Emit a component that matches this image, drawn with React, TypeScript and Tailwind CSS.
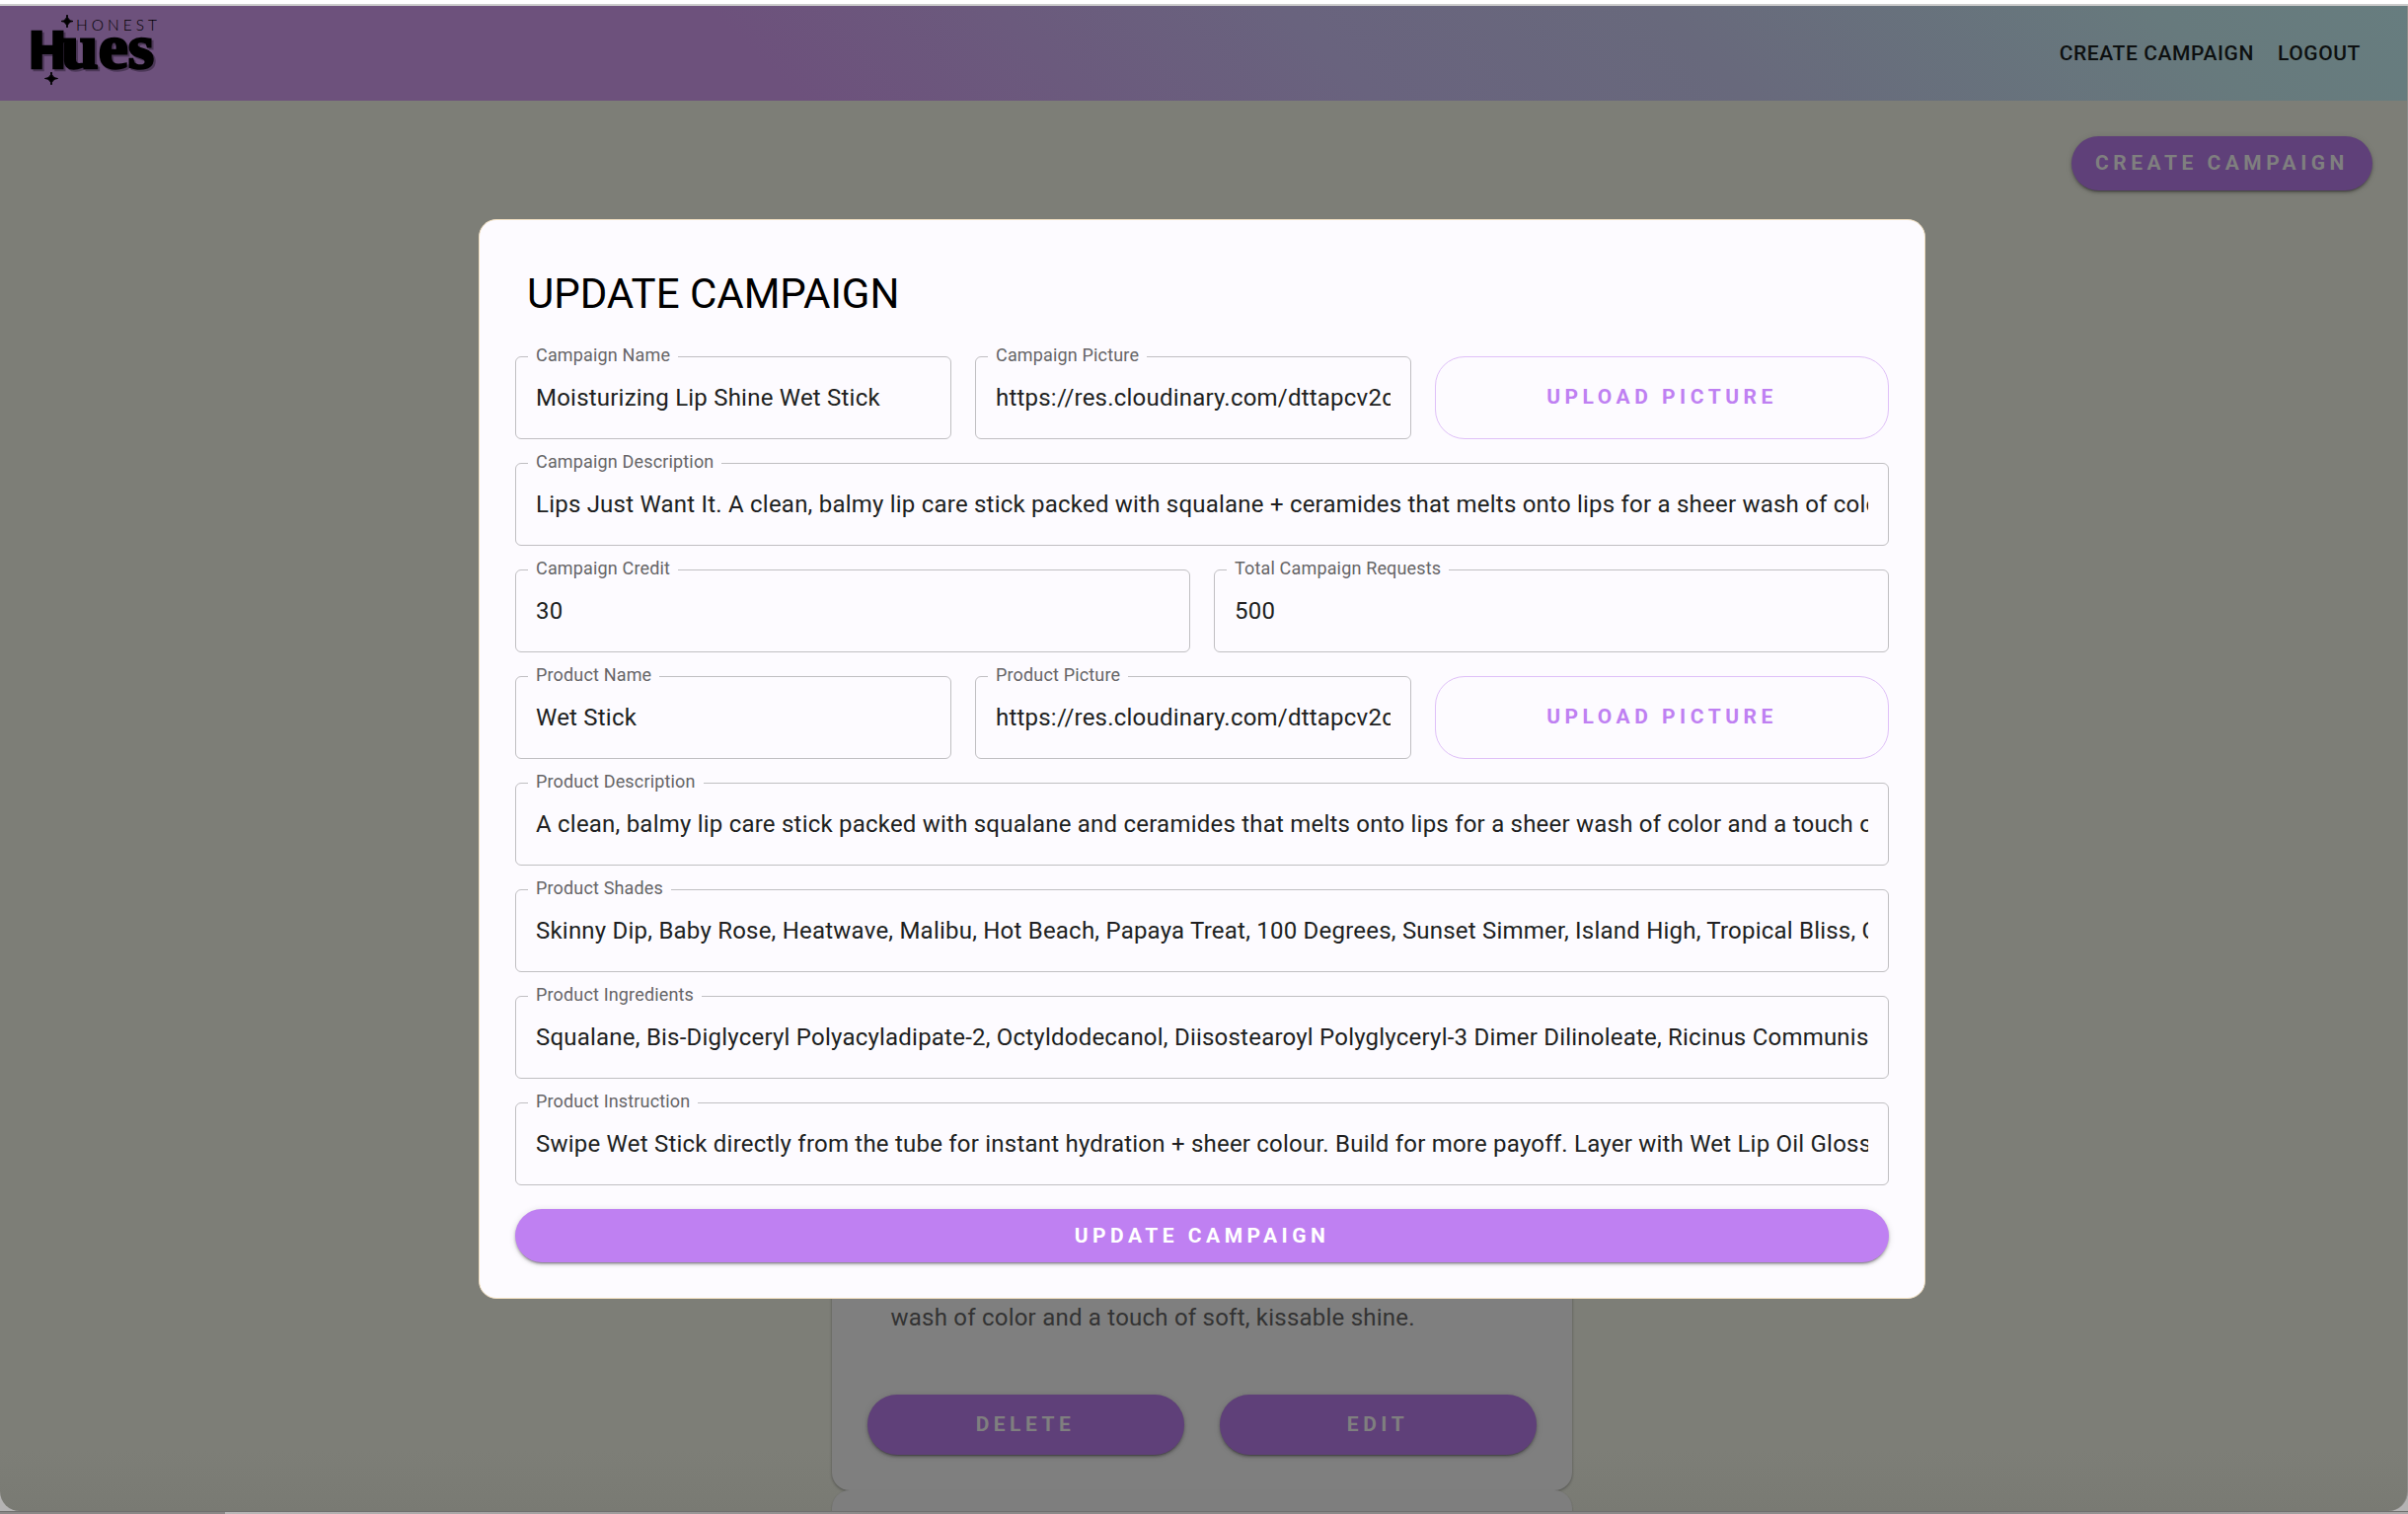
import React from "react";

const raised =
  "shadow-[0_3px_1px_-2px_rgba(0,0,0,0.2),0_2px_3px_0_rgba(0,0,0,0.28),0_1px_7px_0_rgba(0,0,0,0.12)]";

function Field({ label, value, className = "" }: { label: string; value: string; className?: string }) {
  return (
    <fieldset className={`h-[94px] min-w-0 -mt-[10px] rounded-[6px] border border-[#c0bfc2] px-[12px] ${className}`}>
      <legend className="h-[20px] px-[8px] text-[18px] leading-[18px] tracking-[0.16px] text-[#666567] whitespace-nowrap">
        {label}
      </legend>
      <div className="mx-[8px] mt-[15px] overflow-hidden whitespace-nowrap text-[24px] leading-[34px] tracking-[0.217px] text-[#201f21]">
        {value}
      </div>
    </fieldset>
  );
}

function UploadButton() {
  return (
    <button className="h-[84px] w-[460px] shrink-0 rounded-[30px] border border-[#dfc0f8] text-[21px] font-bold tracking-[4.5px] text-[#bf80f2]">
      UPLOAD PICTURE
    </button>
  );
}

function Logo() {
  return (
    <svg className="ml-[30px] mt-[8px] h-[76px] w-[132px]" viewBox="30 14 132 76">
      <path d="M68 15 Q68.500 21 74 21.500 Q68.500 22 68 28 Q67.500 22 62 21.500 Q67.500 21 68 15Z" stroke="#000" />
      <text x="77" y="31" fontSize="15.500" textLength="82" fontFamily="Lato" fontWeight="300" fill="#000">HONEST</text>
      <g
        className="[filter:drop-shadow(2px_2px_0_#4b3757)]"
        fontFamily="Liberation Serif"
        fontWeight="700"
        fill="#000"
        stroke="#000"
        strokeWidth="2.500"
      >
        <text x="30" y="69" fontFamily="Roboto" fontWeight="900" fontSize="52" textLength="36" lengthAdjust="spacingAndGlyphs">H</text>
        <text x="62" y="68.500" fontSize="63" textLength="94" lengthAdjust="spacingAndGlyphs">ues</text>
      </g>
      <path d="M52 73 Q52.500 79 58.500 79.500 Q52.500 80 52 86 Q51.500 80 45.500 79.500 Q51.500 79 52 73Z" stroke="#000" />
    </svg>
  );
}

const purpleButton = "rounded-[30px] bg-[#5f4079] text-[21px] font-bold tracking-[4.5px] text-[#7f7f7f]";

export default function App() {
  return (
    <div className="relative flex h-[1534px] w-[2440px] flex-col overflow-hidden bg-[#b4b3b3] font-[Roboto,sans-serif]">
      <div className="h-[4px] shrink-0 bg-white" />
      <div className="h-[2px] shrink-0 bg-[#cbcbcb]" />
      <div className="flex h-[1525px] shrink-0 flex-col overflow-hidden rounded-b-[20px] border-r border-[#8d8d8a] bg-[linear-gradient(#7d7e77_96%,#797a73)]">
        <header className="flex h-[96px] shrink-0 items-start justify-between bg-[linear-gradient(45deg,#6d517c_0%,#6d517c_32%,#69637e_55%,#68697c_70%,#677a7d_90%,#677d7f_100%)]">
          <Logo />
          <nav className="mr-[47px] mt-[31px] flex gap-[24px] text-[21px] font-medium leading-[34px] tracking-[0.6px] text-[#0d1010]">
            <span>CREATE CAMPAIGN</span>
            <span>LOGOUT</span>
          </nav>
        </header>
        <div className="flex justify-end pr-[35px] pt-[36px]">
          <button className={`h-[55px] w-[305px] ${purpleButton} ${raised}`}>CREATE CAMPAIGN</button>
        </div>
        <main className="mt-[1017px] flex flex-col items-center pr-[4px]">
          <section className="flex h-[300px] w-[750px] shrink-0 flex-col justify-end rounded-[18px] bg-[#7f7f7f] px-[36px] pb-[36px] shadow-[0_1px_3px_rgba(0,0,0,0.35)]">
            <p className="mb-[60px] pl-[24px] text-[24px] leading-[36px] tracking-[0.225px] text-[#333]">
              wash of color and a touch of soft, kissable shine.
            </p>
            <div className="flex gap-[36px]">
              <button className={`h-[61px] flex-1 ${purpleButton} ${raised}`}>DELETE</button>
              <button className={`h-[61px] flex-1 ${purpleButton} ${raised}`}>EDIT</button>
            </div>
          </section>
          <section className="h-[60px] w-[750px] shrink-0 rounded-[18px] bg-[#7e7e7e] shadow-[0_1px_2px_rgba(0,0,0,0.25)]" />
        </main>
      </div>
      <div className="h-[1px] shrink-0 bg-[#706f6e]" />
      <div className="flex h-[2px] shrink-0">
        <div className="w-[228px] bg-[#8b8988]" />
        <div className="flex-1 bg-[linear-gradient(to_right,#b8b7b7,#8c8a8a_30%,#8c8a8a_80%,#aaa8a8)]" />
      </div>

      <div role="dialog" className="absolute left-[485px] top-[222px] flex h-[1094px] w-[1466px] flex-col rounded-[18px] border border-[#f1dfc0] bg-[#fdfbff] px-[36px] pt-[48px]">
        <h1 className="ml-[12px] h-[90px] text-[42px] leading-[54px] text-black">UPDATE CAMPAIGN</h1>
        <form className="flex flex-col gap-[24px]">
          <div className="flex gap-[24px]">
            <Field className="w-[442px]" label="Campaign Name" value="Moisturizing Lip Shine Wet Stick" />
            <Field className="w-[442px]" label="Campaign Picture" value="https://res.cloudinary.com/dttapcv2c/image/upload" />
            <UploadButton />
          </div>
          <Field label="Campaign Description" value="Lips Just Want It. A clean, balmy lip care stick packed with squalane + ceramides that melts onto lips for a sheer wash of color and a touch of shine." />
          <div className="flex gap-[24px]">
            <Field className="flex-1" label="Campaign Credit" value="30" />
            <Field className="flex-1" label="Total Campaign Requests" value="500" />
          </div>
          <div className="flex gap-[24px]">
            <Field className="w-[442px]" label="Product Name" value="Wet Stick" />
            <Field className="w-[442px]" label="Product Picture" value="https://res.cloudinary.com/dttapcv2c/image/upload" />
            <UploadButton />
          </div>
          <Field label="Product Description" value="A clean, balmy lip care stick packed with squalane and ceramides that melts onto lips for a sheer wash of color and a touch of soft, kissable shine." />
          <Field label="Product Shades" value="Skinny Dip, Baby Rose, Heatwave, Malibu, Hot Beach, Papaya Treat, 100 Degrees, Sunset Simmer, Island High, Tropical Bliss, Costa" />
          <Field label="Product Ingredients" value="Squalane, Bis-Diglyceryl Polyacyladipate-2, Octyldodecanol, Diisostearoyl Polyglyceryl-3 Dimer Dilinoleate, Ricinus Communis (Castor)" />
          <Field label="Product Instruction" value="Swipe Wet Stick directly from the tube for instant hydration + sheer colour. Build for more payoff. Layer with Wet Lip Oil Gloss for shine." />
          <button type="button" className={`h-[54px] rounded-[27px] bg-[#bf80f2] pt-[2px] text-[21px] font-bold tracking-[4.5px] text-white ${raised}`}>
            UPDATE CAMPAIGN
          </button>
        </form>
      </div>
    </div>
  );
}
